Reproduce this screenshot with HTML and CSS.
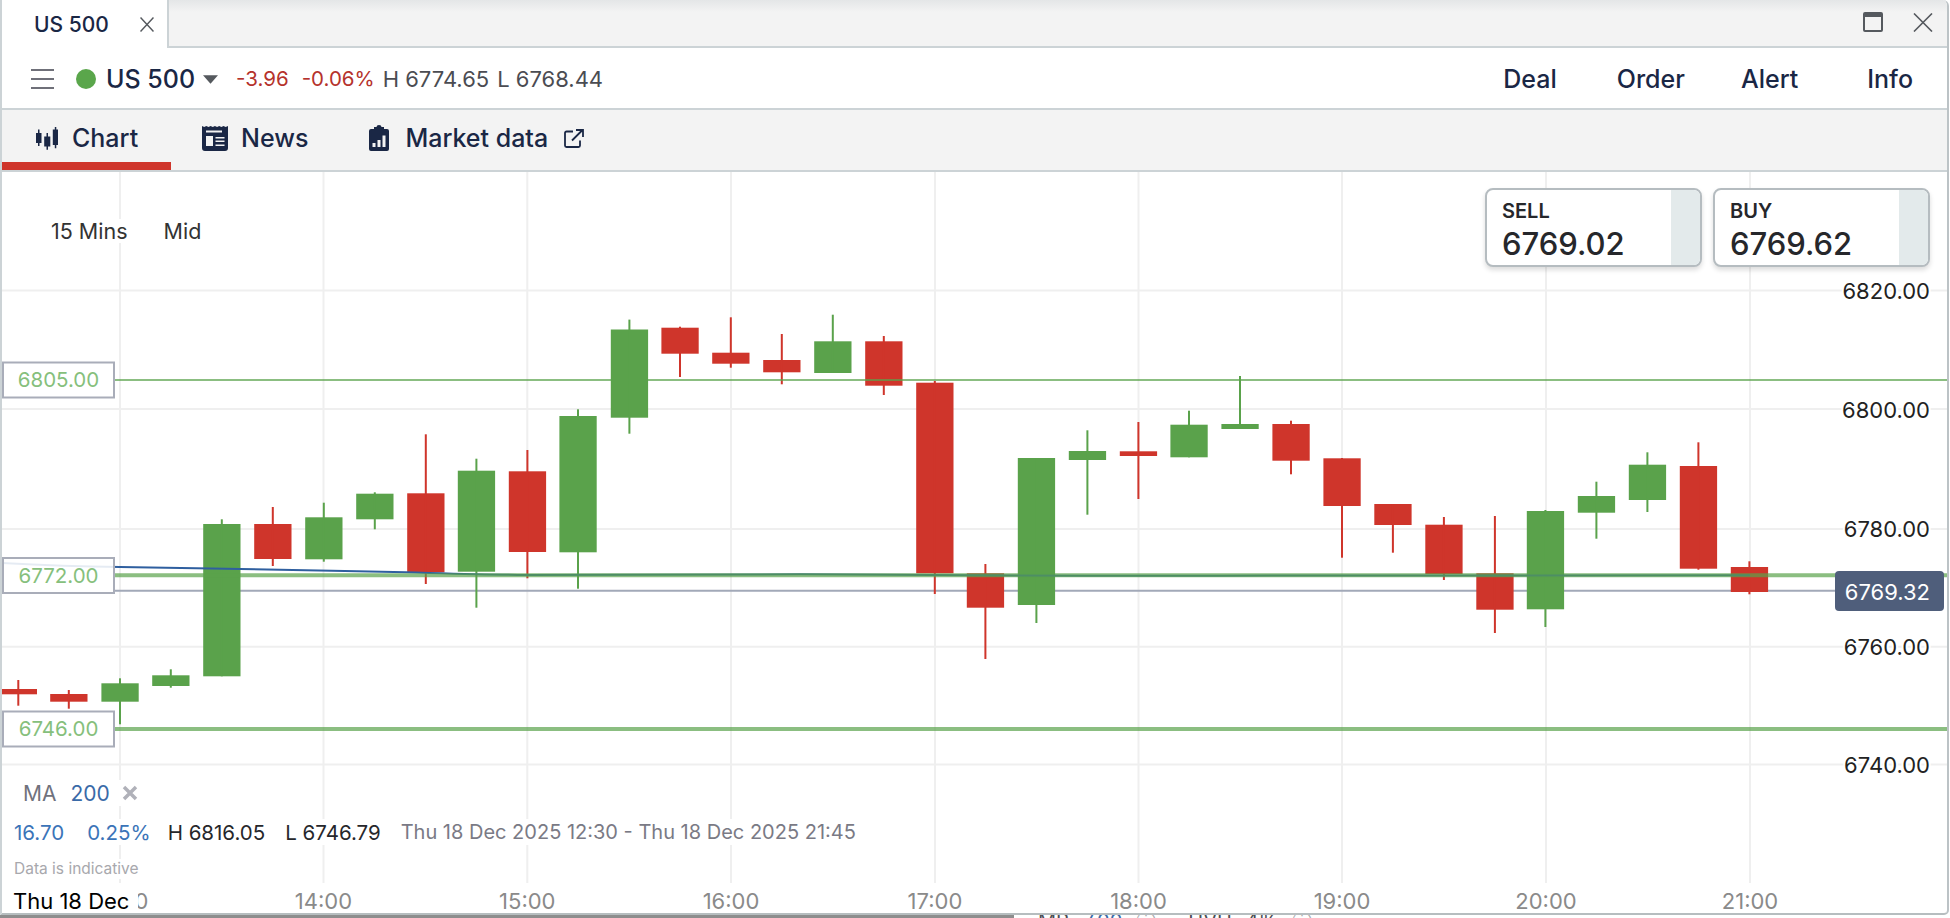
FILE: index.html
```html
<!DOCTYPE html>
<html lang="en">
<head>
<meta charset="utf-8">
<title>US 500</title>
<link rel="stylesheet" href="styles.css">
</head>
<body>
<div class="page">
  <main class="window">
    <div class="tabbar">
      <div class="tab">
        <span class="tab-name">US 500</span>
        <svg class="tab-close" viewBox="0 0 14 15"><path d="M.5.5l13 14M13.500.5l-13 14"/></svg>
      </div>
      <div class="tabbar-fill">
        <svg class="win-max" viewBox="0 0 20 20"><rect x="1" y="1" width="18" height="18" rx="1"/><path class="win-max-top" d="M1 3h18"/></svg>
        <svg class="win-close" viewBox="0 0 20 19"><path d="M1 .5l18 18M19 .5l-18 18"/></svg>
      </div>
    </div>

    <header class="header">
      <button class="menu" aria-label="Menu"><span></span><span></span><span></span></button>
      <span class="status-dot"></span>
      <span class="market">US 500</span>
      <svg class="caret" viewBox="0 0 16 9"><path d="M0 0h16l-8 9z"/></svg>
      <span class="chg chg-abs">-3.96</span>
      <span class="chg chg-pct">-0.06%</span>
      <span class="hl hl-h">H 6774.65</span>
      <span class="hl hl-l">L 6768.44</span>
      <nav class="actions">
        <a class="action action-deal">Deal</a>
        <a class="action action-order">Order</a>
        <a class="action action-alert">Alert</a>
        <a class="action action-info">Info</a>
      </nav>
    </header>

    <nav class="subnav">
      <a class="subtab subtab-chart">
        <svg class="ico-chart" viewBox="0 0 22 23"><path d="M2 2.500h1.500v3.500h2v10h-2v3h-1.500v-3h-2v-10h2zM10.500 6h1.500v3.500h2.300v10h-2.300v3.300h-1.500v-3.300h-2.300v-10h2.300zM18.800 0h1.500v2.500h1.700v15.500h-1.700v3.300h-1.500v-3.300h-2v-15.500h2z"/></svg>
        <span>Chart</span>
      </a>
      <a class="subtab subtab-news">
        <svg class="ico-news" viewBox="0 0 26 26"><path class="ico-fill" d="M0 1l2.200 1 2.100-1 2.200 1 2.100-1 2.200 1 2.100-1 2.200 1 2.100-1 2.200 1 2.100-1 2.200 1 2.300-1v22a3 3 0 0 1-3 3h-20a3 3 0 0 1-3-3z"/><path class="ico-hole" d="M4 5.500h16v2h-16zM4 11h7v10h-7zM13.500 12h9v1.500h-9zM13.500 15.500h9v1.500h-9zM13.500 19.500h9v1.500h-9z"/></svg>
        <span>News</span>
      </a>
      <a class="subtab subtab-market">
        <svg class="ico-market" viewBox="0 0 20 26"><path class="ico-fill" d="M5 2h2.500a2.500 2 0 0 1 5 0h2.500v2h3a2 2 0 0 1 2 2v18a2 2 0 0 1-2 2h-16a2 2 0 0 1-2-2v-18a2 2 0 0 1 2-2h3z"/><path class="ico-hole" d="M3.500 18h3v4h-3zM8.500 15h3v7h-3zM13.500 10.500h3v11.500h-3z"/></svg>
        <span>Market data</span>
        <svg class="ico-ext" viewBox="0 0 20 19"><path d="M9 2.500h-6.500a1.500 1.500 0 0 0-1.500 1.500v12.500a1.500 1.500 0 0 0 1.500 1.500h12a1.500 1.500 0 0 0 1.500-1.500v-5M8 11.500l10.500-10.500M12 1h7v7"/></svg>
      </a>
    </nav>

    <section class="chart">
      <svg class="plot" viewBox="2 172 1945 741" width="1945" height="741">
        <g class="grid">
          <path d="M120 172V883M323.500 172V883M527.300 172V883M731 172V883M935 172V883M1138.500 172V883M1342 172V883M1546 172V883M1750 172V883"/>
          <path d="M2 290.500H1947M2 409H1947M2 529H1947M2 646.700H1947M2 764.500H1947"/>
        </g>
        <path class="last-line" d="M114 590.700H1835"/>

        <g class="red">
          <rect x="2" y="689" width="35" height="5.300"/><rect x="17.300" y="680" width="2" height="25.700"/>
          <rect x="50.200" y="694" width="37.300" height="7.700"/><rect x="67.800" y="690" width="2" height="18.700"/>
          <rect x="254.200" y="524" width="37.300" height="35"/><rect x="271.800" y="507" width="2" height="59"/>
          <rect x="407.200" y="493.300" width="37.300" height="79"/><rect x="424.800" y="434.300" width="2" height="149.700"/>
          <rect x="508.800" y="471.300" width="37.300" height="80.700"/><rect x="526.400" y="450" width="2" height="128.300"/>
          <rect x="661.400" y="327.700" width="37.300" height="26"/><rect x="679" y="326.700" width="2" height="50.300"/>
          <rect x="712.200" y="352.700" width="37.300" height="11"/><rect x="729.800" y="317.300" width="2" height="50.400"/>
          <rect x="763.200" y="360" width="37.300" height="12.300"/><rect x="780.800" y="334" width="2" height="50.300"/>
          <rect x="865.200" y="341.300" width="37.300" height="44.400"/><rect x="882.800" y="336" width="2" height="59"/>
          <rect x="916.200" y="382.700" width="37.300" height="190.600"/><rect x="933.800" y="381" width="2" height="213"/>
          <rect x="966.800" y="573.300" width="37.300" height="34.400"/><rect x="984.400" y="564" width="2" height="95"/>
          <rect x="1119.800" y="451.300" width="37.300" height="4.700"/><rect x="1137.400" y="422" width="2" height="77"/>
          <rect x="1272.400" y="424" width="37.300" height="36.700"/><rect x="1290" y="420.700" width="2" height="53.600"/>
          <rect x="1323.400" y="458.300" width="37.300" height="47.700"/><rect x="1341" y="458" width="2" height="99.700"/>
          <rect x="1374.300" y="504" width="37.300" height="21"/><rect x="1391.900" y="504" width="2" height="48.700"/>
          <rect x="1425.300" y="524.700" width="37.300" height="49.300"/><rect x="1442.900" y="517" width="2" height="63"/>
          <rect x="1476.300" y="573.300" width="37.300" height="36.400"/><rect x="1493.900" y="516" width="2" height="117"/>
          <rect x="1679.800" y="466" width="37.300" height="102.700"/><rect x="1697.400" y="442.300" width="2" height="127.400"/>
          <rect x="1730.800" y="567" width="37.300" height="25"/><rect x="1748.400" y="561.300" width="2" height="33"/>
        </g>
        <g class="green">
          <rect x="101.400" y="683.300" width="37.300" height="18.400"/><rect x="119" y="678.300" width="2" height="46"/>
          <rect x="152.200" y="675.300" width="37.300" height="10.700"/><rect x="169.800" y="669.300" width="2" height="18.400"/>
          <rect x="203.200" y="524" width="37.300" height="152.300"/><rect x="220.800" y="519.300" width="2" height="157"/>
          <rect x="305.200" y="517.300" width="37.300" height="42"/><rect x="322.800" y="502.700" width="2" height="59"/>
          <rect x="356.200" y="493.700" width="37.300" height="25.600"/><rect x="373.800" y="492.300" width="2" height="37"/>
          <rect x="457.800" y="470.700" width="37.300" height="101"/><rect x="475.400" y="458.700" width="2" height="149"/>
          <rect x="559.400" y="416" width="37.300" height="136.300"/><rect x="577" y="409.300" width="2" height="179.400"/>
          <rect x="610.800" y="329.500" width="37.300" height="88.200"/><rect x="628.400" y="319.600" width="2" height="114.100"/>
          <rect x="814.200" y="341.300" width="37.300" height="31.700"/><rect x="831.800" y="314.700" width="2" height="58.300"/>
          <rect x="1017.800" y="458" width="37.300" height="147"/><rect x="1035.400" y="458" width="2" height="165"/>
          <rect x="1068.800" y="451" width="37.300" height="9"/><rect x="1086.400" y="430.300" width="2" height="84.400"/>
          <rect x="1170.400" y="424.700" width="37.300" height="32.600"/><rect x="1188" y="410.700" width="2" height="46.600"/>
          <rect x="1221.400" y="424" width="37.300" height="5"/><rect x="1239" y="376" width="2" height="53"/>
          <rect x="1526.800" y="511" width="37.300" height="98.300"/><rect x="1544.400" y="510" width="2" height="117"/>
          <rect x="1577.800" y="496" width="37.300" height="16.700"/><rect x="1595.400" y="481.700" width="2" height="57"/>
          <rect x="1628.800" y="464.700" width="37.300" height="35.300"/><rect x="1646.400" y="452.300" width="2" height="59.700"/>
        </g>

        <path class="ma" d="M2 563C40 565 80 566.500 120 567C160 568 200 568.300 240 569C300 570 350 571 406 572.300C450 573.500 490 574.800 526 575C600 575.200 700 574.500 800 574.300C900 575 1000 575.600 1087 575.800C1300 575.500 1500 575.300 1750 575.300"/>
        <path class="level level-thin" d="M114 380H1947"/>
        <path class="level level-thick" d="M114 575.300H1947M114 729H1947"/>

        <g class="level-tag"><rect x="3" y="362.500" width="111" height="35"/><text x="58.500" y="387">6805.00</text></g>
        <g class="level-tag"><rect x="3" y="558" width="111" height="35"/><text x="58.500" y="582.500">6772.00</text></g>
        <g class="level-tag"><rect x="3" y="711.500" width="111" height="35"/><text x="58.500" y="736">6746.00</text></g>

        <g class="y-axis">
          <text x="1930" y="299">6820.00</text>
          <text x="1930" y="417.500">6800.00</text>
          <text x="1930" y="537">6780.00</text>
          <text x="1930" y="655">6760.00</text>
          <text x="1930" y="773">6740.00</text>
        </g>
        <rect class="price-tag" x="1835" y="571" width="109" height="40" rx="4"/>
        <text class="price-tag-text" x="1930" y="599.500">6769.32</text>

        <g class="x-axis">
          <text x="120" y="909">13:00</text>
          <text x="323.500" y="909">14:00</text>
          <text x="527.300" y="909">15:00</text>
          <text x="731" y="909">16:00</text>
          <text x="935" y="909">17:00</text>
          <text x="1138.500" y="909">18:00</text>
          <text x="1342" y="909">19:00</text>
          <text x="1546" y="909">20:00</text>
          <text x="1750" y="909">21:00</text>
        </g>
      </svg>

      <div class="interval">
        <span>15 Mins</span>
        <span>Mid</span>
      </div>

      <div class="quotes">
        <div class="quote">
          <div class="quote-body"><span class="quote-side">SELL</span><span class="quote-price">6769.02</span></div>
          <div class="quote-strip"></div>
        </div>
        <div class="quote">
          <div class="quote-body"><span class="quote-side">BUY</span><span class="quote-price">6769.62</span></div>
          <div class="quote-strip"></div>
        </div>
      </div>

      <div class="legend">
        <div class="legend-ma">
          <span class="ma-name">MA</span>
          <span class="ma-val">200</span>
          <svg class="ma-x" viewBox="0 0 16 16"><path d="M2 2l12 12M14 2l-12 12"/></svg>
        </div>
        <div class="legend-stats">
          <span class="stat-blue s-abs">16.70</span>
          <span class="stat-blue s-pct">0.25%</span>
          <span class="stat-dark s-h">H 6816.05</span>
          <span class="stat-dark s-l">L 6746.79</span>
          <span class="stat-range">Thu 18 Dec 2025 12:30 - Thu 18 Dec 2025 21:45</span>
        </div>
        <div class="legend-note">Data is indicative</div>
      </div>

      <div class="date-tag">Thu 18 Dec</div>
    </section>
  </main>
  <div class="peek">
    <div class="peek-dark"></div>
    <div class="peek-text">
      <span>MR</span><span class="peek-blue">7.00</span><span class="peek-info">ⓘ</span>
      <span class="peek-gap">UVH</span><span>4%</span><span class="peek-info">ⓘ</span>
    </div>
  </div>
</div>
</body>
</html>
```

FILE: styles.css
```css
* { box-sizing: border-box; }
html, body { margin: 0; padding: 0; background: #fff; }
body {
  width: 1950px;
  height: 918px;
  overflow: hidden;
  font-family: Inter, "Liberation Sans", sans-serif;
  color: #1a2745;
}
a { color: inherit; text-decoration: none; }

.page { display: flex; flex-direction: column; width: 1950px; height: 918px; }

.window {
  display: flex;
  flex-direction: column;
  width: 1949px;
  height: 915px;
  flex: none;
  border-left: 2px solid #ccd3d6;
  border-right: 2px solid #bcc3c6;
  border-bottom: 2px solid #b6bdbf;
  border-radius: 0 6px 5px 0;
  background: #fff;
  overflow: hidden;
}

/* Tab strip */
.tabbar { display: flex; height: 48px; flex: none; }
.tab {
  display: flex;
  align-items: center;
  width: 167px;
  padding-left: 32px;
  background: #fff;
  border-right: 2px solid #ccd3d6;
}
.tab-name { font-size: 21px; font-weight: 500; width: 106px; flex: none; }
.tab-close { width: 14px; height: 15px; fill: none; stroke: #55595e; stroke-width: 1.500; flex: none; }
.tabbar-fill {
  flex: 1;
  display: flex;
  align-items: center;
  justify-content: flex-end;
  padding: 0 14px 2px 0;
  border-bottom: 2px solid #ccd3d6;
  background: linear-gradient(#e4e6e7, #f3f3f3 12px);
}
.win-max { width: 20px; height: 20px; margin-right: 30px; fill: none; stroke: #55595e; stroke-width: 2; }
.win-max .win-max-top { stroke-width: 4; }
.win-close { width: 20px; height: 19px; fill: none; stroke: #55595e; stroke-width: 1.600; }

/* Instrument header */
.header {
  display: flex;
  align-items: center;
  height: 62px;
  flex: none;
  padding: 1px 0 0 29px;
  border-bottom: 2px solid #ccd3d6;
}
.menu {
  display: flex;
  flex-direction: column;
  justify-content: space-between;
  width: 23px;
  height: 20px;
  margin-right: 22px;
  padding: 0;
  border: 0;
  background: none;
}
.menu span { display: block; height: 2px; background: #6f7079; }
.status-dot { width: 20px; height: 20px; border-radius: 50%; background: #5aa64b; margin-right: 10px; }
.market { font-size: 25px; font-weight: 500; margin-right: 8px; }
.caret { width: 15px; height: 9px; fill: #55595e; margin-right: 18px; margin-top: 2px; }
.chg { font-size: 20.500px; color: #b5322c; }
.chg-abs { margin-right: 13px; }
.chg-pct { margin-right: 8px; }
.hl { font-size: 22px; color: #4b4c52; }
.hl-h { margin-right: 8px; }
.actions { margin-left: auto; display: flex; font-size: 25px; font-weight: 500; padding-right: 34px; }
.action-order { margin-left: 60px; }
.action-alert { margin-left: 56px; }
.action-info { margin-left: 69px; }

/* Section tabs */
.subnav {
  display: flex;
  height: 62px;
  flex: none;
  background: #f3f3f3;
  border-bottom: 2px solid #ccd3d6;
  font-size: 25px;
  font-weight: 500;
}
.subtab { display: flex; align-items: center; height: 60px; padding-bottom: 2px; }
.subtab-chart {
  width: 169px;
  padding: 4px 0 0 34px;
  border-bottom: 8px solid #cf352b;
  gap: 14px;
}
.subtab-news { padding-left: 31px; padding-bottom: 4px; gap: 13px; }
.subtab-market { padding-left: 61px; padding-bottom: 4px; gap: 16px; }
.ico-chart { width: 22px; height: 23px; fill: #1a2745; }
.ico-news { width: 26px; height: 26px; }
.ico-market { width: 20px; height: 26px; }
.ico-fill { fill: #1a2745; }
.ico-hole { fill: #f3f3f3; }
.ico-ext { width: 20px; height: 19px; fill: none; stroke: #1a2745; stroke-width: 1.800; }

/* Chart */
.chart { position: relative; flex: 1; overflow: hidden; }
.plot { display: block; }
.plot text { font-family: Inter, "Liberation Sans", sans-serif; }
.grid path { fill: none; stroke: #efefef; stroke-width: 2; }
.last-line { fill: none; stroke: #a2a9b8; stroke-width: 2; }
.red { fill: #cf352b; }
.green { fill: #5aa24b; }
.level { fill: none; stroke: #5aa24b; stroke-opacity: .7; }
.level-thin { stroke-width: 2; }
.level-thick { stroke-width: 4; }
.ma { fill: none; stroke: #2f5f9f; stroke-width: 2; }
.level-tag rect { fill: #fff; fill-opacity: .88; stroke: #a9adb9; stroke-width: 2; }
.level-tag text { font-size: 20.500px; fill: #86bf7c; text-anchor: middle; }
.y-axis text {
  font-size: 22px;
  fill: #222;
  text-anchor: end;
  stroke: #fff;
  stroke-width: 4px;
  paint-order: stroke;
}
.price-tag { fill: #4f5e7b; }
.price-tag-text { font-size: 22px; fill: #fff; text-anchor: end; }
.x-axis text { font-size: 22px; fill: #8a8a8a; text-anchor: middle; }

.interval {
  position: absolute;
  left: 49px;
  top: 47px;
  display: flex;
  gap: 36px;
  font-size: 21.500px;
  color: #333;
  background: #fff;
  line-height: 24px;
}

.quotes { position: absolute; top: 16px; right: 17px; display: flex; gap: 11px; }
.quote {
  display: flex;
  width: 217px;
  height: 79px;
  border: 2px solid #b5bcc0;
  border-radius: 8px;
  background: #fff;
  overflow: hidden;
  box-shadow: 0 3px 5px rgba(0, 0, 0, .14);
}
.quote-body {
  flex: 1;
  display: flex;
  flex-direction: column;
  padding: 9px 0 0 15px;
  color: #26272b;
}
.quote-side { font-size: 20px; font-weight: 600; line-height: 24px; }
.quote-price { font-size: 31px; font-weight: 500; line-height: 36px; margin-top: 3px; }
.quote-strip { width: 29px; background: #e3eaeb; }

.legend {
  position: absolute;
  left: 12px;
  top: 608px;
  display: flex;
  flex-direction: column;
  align-items: flex-start;
}
.legend-ma {
  display: flex;
  align-items: center;
  height: 26px;
  padding-left: 9px;
  font-size: 21px;
  background: #fff;
}
.ma-name { color: #70727d; margin-right: 14px; }
.ma-val { color: #3a6aa8; margin-right: 12px; }
.ma-x { width: 16px; height: 16px; fill: none; stroke: #b0b1b9; stroke-width: 3.500; }
.legend-stats {
  display: flex;
  align-items: center;
  height: 26px;
  margin-top: 13px;
  font-size: 20.500px;
  background: #fff;
}
.stat-blue { color: #3b74b8; }
.s-abs { margin-right: 23px; }
.s-pct { margin-right: 17px; }
.stat-dark { color: #26272b; }
.s-h { margin-right: 20px; }
.s-l { margin-right: 20px; }
.stat-range { color: #7a7a85; font-size: 20px; }
.legend-note {
  height: 20px;
  margin-top: 14px;
  font-size: 15.500px;
  line-height: 20px;
  color: #a8a8ad;
  background: #fff;
}

.date-tag {
  position: absolute;
  left: 0;
  top: 717px;
  width: 136px;
  height: 24px;
  padding-left: 11px;
  font-size: 22px;
  line-height: 24px;
  color: #000;
  background: #fff;
}

/* Page behind the window, barely visible below it */
.peek { display: flex; height: 3px; flex: none; overflow: hidden; background: #fff; }
.peek-dark { width: 1014px; background: #8d8d8d; }
.peek-text {
  display: flex;
  gap: 14px;
  height: 20px;
  margin-top: -4px;
  padding-left: 24px;
  font-size: 20px;
  line-height: 20px;
  color: #4b4c52;
}
.peek-blue { color: #3a6aa8; }
.peek-info { color: #a8a8ad; }
.peek-gap { margin-left: 18px; }
```
